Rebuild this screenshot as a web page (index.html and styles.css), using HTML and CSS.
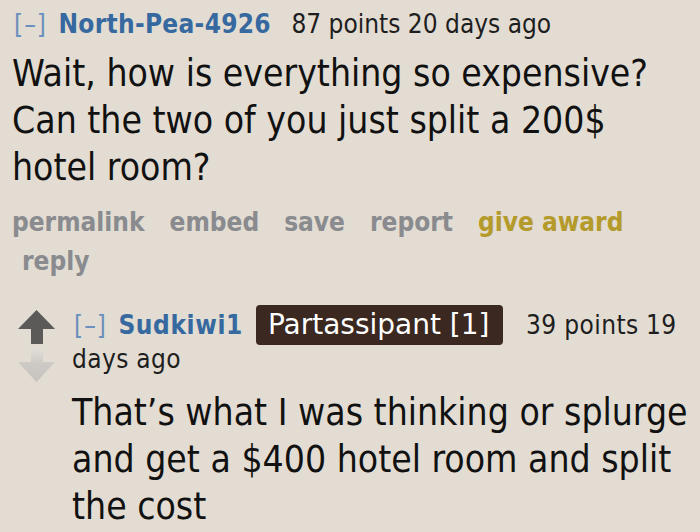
FILE: index.html
```html
<!DOCTYPE html>
<html>
<head>
<meta charset="utf-8">
<link rel="stylesheet" href="styles.css">
</head>
<body>
<div class="comment">
  <p class="tagline">
    <a class="expand">[–]</a>
    <a class="author">North-Pea-4926</a>
    <span class="score">87 points</span>
    <span class="time">20 days ago</span>
  </p>
  <div class="md">
    <p>Wait, how is everything so expensive? Can the two of you just split a 200$ hotel room?</p>
  </div>
  <ul class="buttons">
    <li>permalink</li>
    <li>embed</li>
    <li>save</li>
    <li>report</li>
    <li class="award">give award</li>
    <li>reply</li>
  </ul>
  <div class="child">
    <div class="midcol">
      <svg class="arrows" width="38" height="76" viewBox="0 0 38 76">
        <defs>
          <linearGradient id="fade" x1="0" y1="0" x2="0" y2="1">
            <stop offset="0" stop-color="#e0ddd8"/>
            <stop offset="0.45" stop-color="#cdcac6"/>
            <stop offset="1" stop-color="#c6c3bf"/>
          </linearGradient>
        </defs>
        <path d="M18.5 2 L37 21 L25 21 L25 36 L13 36 L13 21 L0 21 Z" fill="#5b5a59"/>
        <path d="M13 41 L25 41 L25 54 L37 54 L18.5 74 L0 54 L13 54 Z" fill="url(#fade)"/>
      </svg>
    </div>
    <div class="entry">
      <p class="tagline tagline2">
        <a class="expand">[–]</a>
        <a class="author author2">Sudkiwi1</a><span class="flair">Partassipant [1]</span>
        <span class="score">39 points</span>
        <span class="time">19</span>
        <span class="time">days</span>
        <span class="time">ago</span>
      </p>
      <div class="md md2">
        <p>That’s what I was thinking or splurge and get a $400 hotel room and split the cost</p>
      </div>
    </div>
  </div>
</div>
</body>
</html>
```

FILE: styles.css
```css
html, body {
  margin: 0;
  padding: 0;
  background: #e3dcd2;
  width: 700px;
  height: 532px;
  overflow: hidden;
}
body {
  font-family: "DejaVu Sans Condensed", "DejaVu Sans", sans-serif;
  color: #222;
}
.comment {
  padding: 8px 0 0 12px;
}
.tagline {
  margin: 0;
  font-size: 26px;
  line-height: 32px;
  color: #1e1e1e;
}
.tagline2 {
  line-height: 34px;
}
.tagline2 .score, .tagline2 .time {
  letter-spacing: 0.4px;
}
.expand {
  color: #6a90bd;
  font-weight: normal;
  letter-spacing: 1px;
  margin-left: 2px;
  margin-right: 4px;
}
.author {
  color: #36699f;
  font-weight: bold;
  letter-spacing: 0.3px;
  margin-right: 13px;
}
.author2 {
  letter-spacing: 0.6px;
}
.md {
  margin-top: 10px;
}
.md p {
  margin: 0;
  font-size: 37px;
  line-height: 47px;
  color: #111;
}
.buttons {
  list-style: none;
  margin: 12px 0 0 0;
  padding: 0;
  display: flex;
  flex-wrap: wrap;
  font-size: 26px;
  font-weight: bold;
  line-height: 39px;
  color: #898b8f;
}
.buttons li {
  padding: 0 12.5px;
}
.buttons li:first-child {
  padding-left: 0;
}
.buttons li:last-child {
  padding-left: 10px;
}
.buttons .award {
  color: #b39a2b;
}
.child {
  display: flex;
  margin-top: 27px;
  margin-left: 6px;
}
.midcol {
  width: 54px;
  flex: none;
}
.arrows {
  display: block;
}
.entry {
  flex: 1;
  min-width: 0;
}
.flair {
  display: inline-block;
  font-family: "DejaVu Sans", sans-serif;
  font-size: 28px;
  line-height: 30px;
  background: #3a2821;
  color: #fff;
  padding: 5px 13px 5px 12px;
  margin: -4px 16px -4px 0;
  border-radius: 4px;
}
.md2 {
  margin-top: 13px;
}
```
